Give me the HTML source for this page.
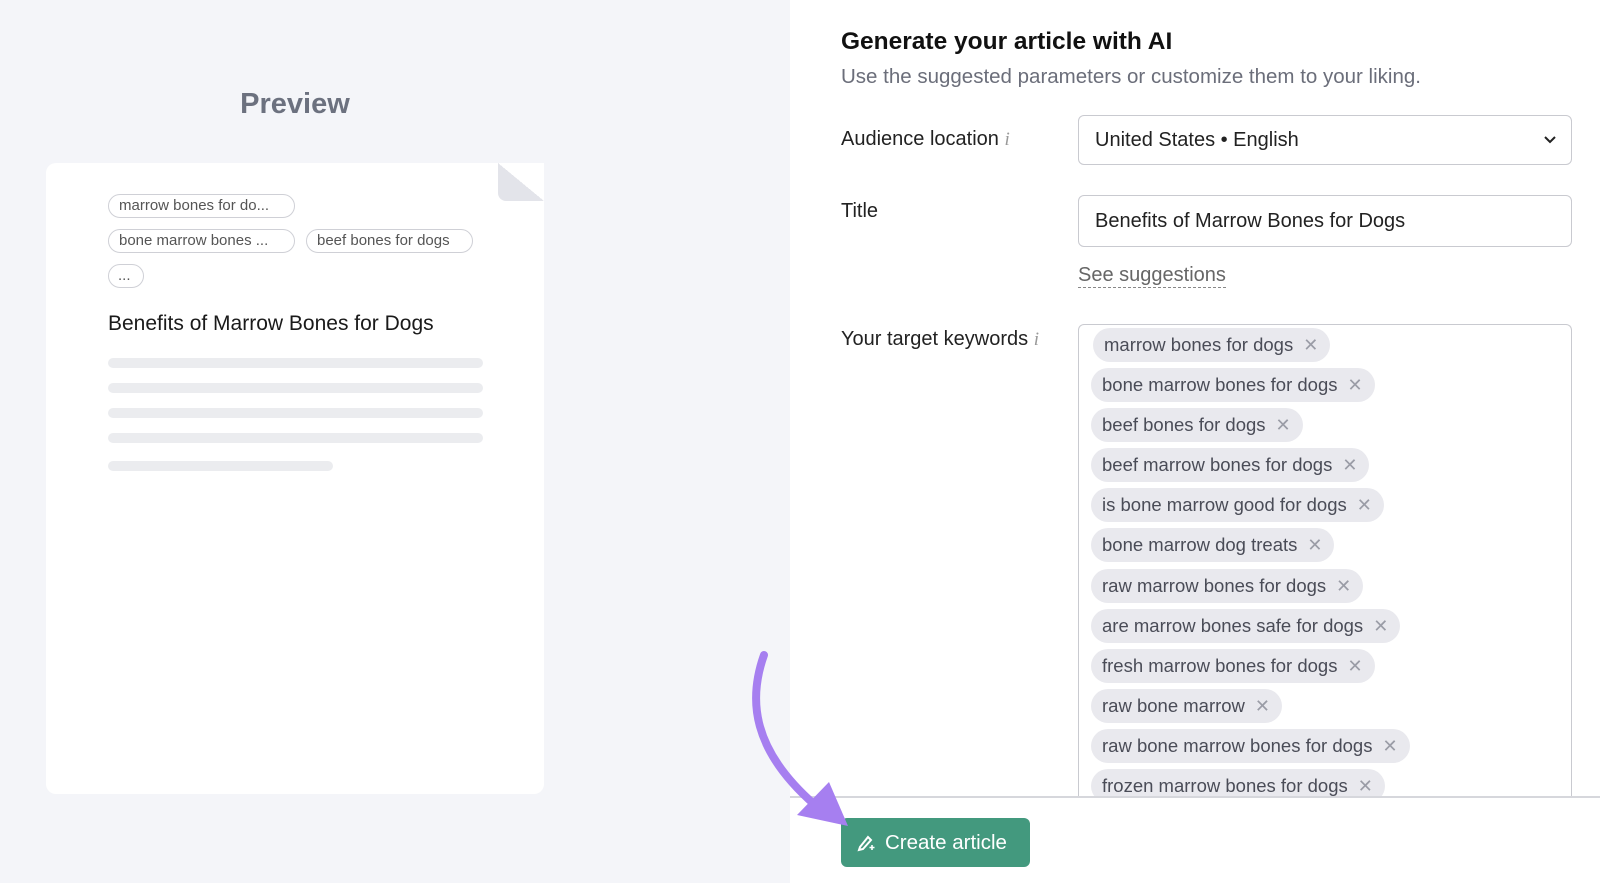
<!DOCTYPE html>
<html><head><meta charset="utf-8"><style>
*{margin:0;padding:0;box-sizing:border-box}
body{width:1600px;height:883px;overflow:hidden;background:#fff;font-family:"Liberation Sans",sans-serif;position:relative}
.left{position:absolute;left:0;top:0;width:790px;height:883px;background:#f4f5f9}
.ptitle{position:absolute;left:0;width:590px;top:88px;text-align:center;font-size:29px;color:#6c717f;font-weight:bold}
.card{position:absolute;left:46px;top:163px;width:498px;height:631px;background:#fff;border-radius:10px}
.fold{position:absolute;right:0;top:0;width:46px;height:38px;background:linear-gradient(to bottom left,#fff 50%,#e3e4ea 50%);border-bottom-left-radius:8px}
.pc{position:absolute;height:24px;border:1px solid #cfd0d6;border-radius:12px;font-size:15px;color:#555;line-height:22px;padding:0 10px;white-space:nowrap;overflow:hidden}
.ln{position:absolute;left:62px;height:10px;background:#ebecef;border-radius:5px}
.abs{position:absolute;white-space:nowrap}
.lbl{font-size:20px;color:#222}
.inp{position:absolute;left:1078px;width:494px;border:1px solid #c9cad0;border-radius:6px;font-size:20px;color:#222;padding-left:16px}
.chip{position:absolute;left:1091px;height:34px;background:#e9e9ee;border-radius:17px;font-size:18.5px;color:#4a4c57;line-height:34px;padding:0 12px 0 11px;white-space:nowrap}
.chip i{font-style:normal;color:#9a9ca6;margin-left:10px;font-size:18px}
.ii{font-style:italic;color:#999;font-family:"Liberation Serif",serif;font-size:19px}
</style></head><body>
<div class="left">
<div class="ptitle">Preview</div>
<div class="card"><div class="fold"></div>
<div class="pc" style="left:62px;top:31px;width:187px">marrow bones for do...</div>
<div class="pc" style="left:62px;top:66px;width:187px">bone marrow bones ...</div>
<div class="pc" style="left:260px;top:66px;width:167px">beef bones for dogs</div>
<div class="pc" style="left:62px;top:101px;width:36px;padding:0 9px">...</div>
<div class="abs" style="left:62px;top:149px;font-size:21px;color:#1a1a1a">Benefits of Marrow Bones for Dogs</div>
<div class="ln" style="top:195px;width:375px"></div>
<div class="ln" style="top:220px;width:375px"></div>
<div class="ln" style="top:245px;width:375px"></div>
<div class="ln" style="top:270px;width:375px"></div>
<div class="ln" style="top:298px;width:225px"></div>
</div>
</div>
<div class="abs" style="left:841px;top:28px;font-size:24.5px;font-weight:bold;color:#111">Generate your article with AI</div>
<div class="abs" style="left:841px;top:65px;font-size:20.5px;color:#6b6e7a">Use the suggested parameters or customize them to your liking.</div>
<div class="abs lbl" style="left:841px;top:128px">Audience location <span class="ii">i</span></div>
<div class="abs lbl" style="left:841px;top:200px">Title</div>
<div class="abs lbl" style="left:841px;top:328px">Your target keywords <span class="ii">i</span></div>
<div class="inp" style="top:115px;height:50px;line-height:48px">United States • English
<svg style="position:absolute;right:14px;top:19px" width="14" height="10" viewBox="0 0 14 10"><path d="M2 2 L7 7 L12 2" stroke="#222" stroke-width="2" fill="none"/></svg></div>
<div class="inp" style="top:195px;height:52px;line-height:50px">Benefits of Marrow Bones for Dogs</div>
<div class="abs" style="left:1078px;top:264px;font-size:20px;color:#666;border-bottom:1.5px dashed #888;line-height:23px">See suggestions</div>
<div style="position:absolute;left:1078px;top:324px;width:494px;height:473px;border:1px solid #c9cad0;border-bottom:none;border-radius:6px 6px 0 0;overflow:hidden">
</div>
<div class="chip" style="top:328px;left:1093px">marrow bones for dogs<i>✕</i></div>
<div class="chip" style="top:368px">bone marrow bones for dogs<i>✕</i></div>
<div class="chip" style="top:408px">beef bones for dogs<i>✕</i></div>
<div class="chip" style="top:448px">beef marrow bones for dogs<i>✕</i></div>
<div class="chip" style="top:488px">is bone marrow good for dogs<i>✕</i></div>
<div class="chip" style="top:528px">bone marrow dog treats<i>✕</i></div>
<div class="chip" style="top:569px">raw marrow bones for dogs<i>✕</i></div>
<div class="chip" style="top:609px">are marrow bones safe for dogs<i>✕</i></div>
<div class="chip" style="top:649px">fresh marrow bones for dogs<i>✕</i></div>
<div class="chip" style="top:689px">raw bone marrow<i>✕</i></div>
<div class="chip" style="top:729px">raw bone marrow bones for dogs<i>✕</i></div>
<div style="position:absolute;left:1078px;top:763px;width:494px;height:34px;overflow:hidden"><div class="chip" style="top:6px;left:13px">frozen marrow bones for dogs<i>✕</i></div></div>
<div style="position:absolute;left:790px;top:796px;width:810px;height:2px;background:#d6d7dc"></div>
<div style="position:absolute;left:841px;top:818px;width:189px;height:49px;background:#43997e;border-radius:6px;color:#fff;font-size:20.5px;line-height:49px;padding-left:44px">Create article
<svg style="position:absolute;left:15px;top:15px" width="20" height="20" viewBox="0 0 20 20"><path d="M4 14 L12 4 L15 7 L7 16 L3 17 Z" stroke="#fff" stroke-width="2" fill="none"/><path d="M16 12 v5 M13.5 14.5 h5" stroke="#fff" stroke-width="1.6"/></svg></div>
<svg style="position:absolute;left:0;top:0" width="1600" height="883"><path d="M764 655 C 748 700, 752 750, 815 805" stroke="#a67ff0" stroke-width="8" fill="none" stroke-linecap="round"/><path d="M797 815 L829 782 L848 826 Z" fill="#a67ff0"/></svg>
</body></html>
